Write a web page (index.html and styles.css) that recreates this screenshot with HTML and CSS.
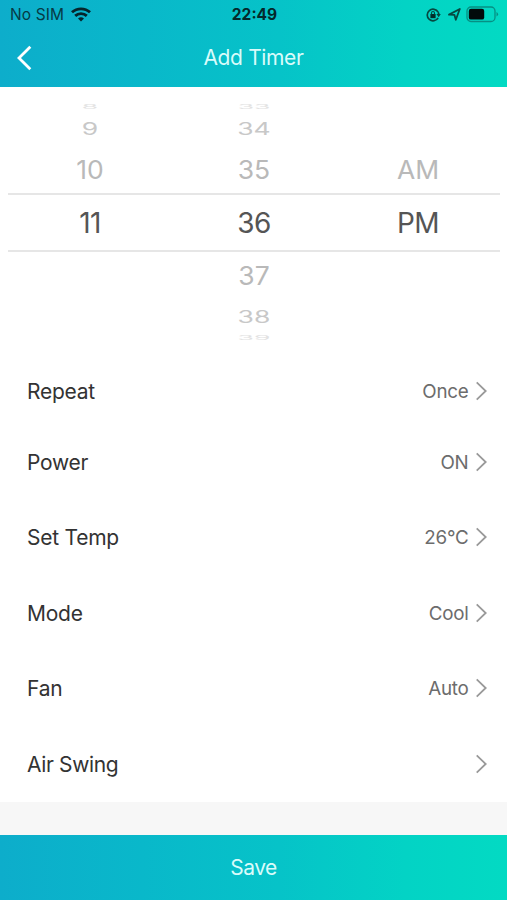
FILE: index.html
```html
<!DOCTYPE html>
<html lang="en">
<head>
<meta charset="utf-8">
<title>Add Timer</title>
<link rel="stylesheet" href="styles.css">
</head>
<body>
<header class="header">
  <div class="status">
    <div class="status-left">
      <span class="carrier">No SIM</span>
      <svg class="wifi" width="20" height="15" viewBox="0 0 20 15" fill="none" stroke="#06262c" stroke-width="2.9">
        <path d="M1 5.3C6 .7 14 .7 19 5.3"/>
        <path d="M4.2 8.9C7.5 5.9 12.5 5.9 15.8 8.9"/>
        <path d="M7 11.4Q10 9 13 11.4L10 14.5Z" fill="#06262c" stroke="none"/>
      </svg>
    </div>
    <span class="clock">22:49</span>
    <div class="status-right">
      <svg width="15" height="14" viewBox="0 0 15 14" fill="none" stroke="#064840" stroke-width="1.7">
        <path d="M12.1 4.2A5.8 5.8 0 1 0 12.1 9.8"/>
        <path d="M10.4 6h4.4l-2.1 3.2z" fill="#064840" stroke="none"/>
        <path d="M12.1 4.2Q12.9 5.4 12.8 7"/>
        <rect x="4.4" y="6" width="5.2" height="4.2" fill="#032d28" stroke="none"/>
        <path d="M5.5 6.5V5a1.5 1.5 0 0 1 3 0v1.5" stroke-width="1.1"/>
      </svg>
      <svg class="arrow" width="13" height="13" viewBox="0 0 13 13" fill="none" stroke="#064840" stroke-width="1.8" stroke-linejoin="round">
        <path d="M1 6.6L11.8 1L7.8 11.8L6.4 6.8Z"/>
      </svg>
      <svg class="battery" width="33" height="17" viewBox="0 0 33 17">
        <rect x="1" y="1" width="28" height="14.5" rx="4" fill="none" stroke="#078f83" stroke-width="1.3"/>
        <rect x="2.8" y="2.8" width="15.4" height="10.8" rx="2.2" fill="#020b0b"/>
        <path d="M30.5 6v4.5q1.6-.6 1.6-2.2T30.5 6Z" fill="#078f83"/>
      </svg>
    </div>
  </div>
  <div class="nav">
    <svg class="back" width="17" height="26" viewBox="0 0 17 26" fill="none" stroke="#fff" stroke-width="2.8"><path d="M15.3 1.8L4 13L15.3 24.2"/></svg>
    <h1 class="title">Add Timer</h1>
  </div>
</header>
<main>
  <section class="picker">
    <div class="wheel edge first"><span>8</span><span>33</span><span></span></div>
    <div class="wheel far"><span>9</span><span>34</span><span></span></div>
    <div class="wheel near"><span>10</span><span>35</span><span>AM</span></div>
    <div class="wheel selected"><span>11</span><span>36</span><span>PM</span></div>
    <div class="wheel near below"><span></span><span>37</span><span></span></div>
    <div class="wheel far below"><span></span><span>38</span><span></span></div>
    <div class="wheel edge last"><span></span><span>39</span><span></span></div>
  </section>
  <section class="settings">
    <div class="row repeat"><span class="label">Repeat</span><span class="value">Once</span><svg class="chev" viewBox="0 0 12 20"><path d="M.7 1.3L9.7 10L.7 18.7"/></svg></div>
    <div class="row"><span class="label">Power</span><span class="value">ON</span><svg class="chev" viewBox="0 0 12 20"><path d="M.7 1.3L9.7 10L.7 18.7"/></svg></div>
    <div class="row"><span class="label">Set Temp</span><span class="value">26°C</span><svg class="chev" viewBox="0 0 12 20"><path d="M.7 1.3L9.7 10L.7 18.7"/></svg></div>
    <div class="row"><span class="label">Mode</span><span class="value">Cool</span><svg class="chev" viewBox="0 0 12 20"><path d="M.7 1.3L9.7 10L.7 18.7"/></svg></div>
    <div class="row"><span class="label">Fan</span><span class="value">Auto</span><svg class="chev" viewBox="0 0 12 20"><path d="M.7 1.3L9.7 10L.7 18.7"/></svg></div>
    <div class="row"><span class="label swing">Air Swing</span><span class="value"></span><svg class="chev" viewBox="0 0 12 20"><path d="M.7 1.3L9.7 10L.7 18.7"/></svg></div>
  </section>
</main>
<button class="save">Save</button>
</body>
</html>
```
FILE: styles.css
```css
* { box-sizing: border-box; }
body {
  margin: 0;
  height: 900px;
  display: flex;
  flex-direction: column;
  background: #f7f7f7;
  font-family: Inter, "Liberation Sans", sans-serif;
  overflow: hidden;
}
.header, .save {
  background: linear-gradient(90deg, #0dadcb 0%, #09b8ca 28%, #06c3c8 55%, #03d3c5 80%, #03dac3 100%);
}
.header { height: 87px; }
.status {
  height: 29px;
  display: grid;
  grid-template-columns: 1fr auto 1fr;
  align-items: center;
  padding: 0 8px 0 10px;
}
.status-left, .status-right { display: flex; align-items: center; }
.status-right { justify-content: flex-end; }
.carrier { font-size: 15.5px; letter-spacing: .1px; color: #063a45; }
.wifi { margin-left: 7px; }
.clock { font-size: 15.5px; font-weight: 700; color: #04282b; }
.arrow { margin: 0 5px 0 7px; }
.nav {
  height: 58px;
  display: grid;
  grid-template-columns: 40px 1fr 40px;
  align-items: center;
}
.back { margin-left: 15px; }
.title {
  margin: 0;
  text-align: center;
  font-size: 21px;
  font-weight: 400;
  line-height: 58px;
  letter-spacing: -.35px;
  color: #d9fbfa;
}
main { height: 715px; background: #fff; }
.picker { height: 254px; padding: 17px 7px 0 8px; }
.wheel {
  display: grid;
  grid-template-columns: repeat(3, 1fr);
  align-items: center;
  text-align: center;
  font-size: 26.5px;
  line-height: 30px;
  color: #b9b9b9;
}
.near { height: 45px; padding-bottom: 3px; }
.near.below { height: 48px; padding-bottom: 2px; }
.near span { transform: scaleY(.97); }
.far { height: 39px; color: #c8c8c8; }
.far.below { height: 34px; }
.far span { transform: scaleY(.63); }
.selected {
  height: 59px;
  padding-top: 1px;
  border-top: 2px solid #e6e6e6;
  border-bottom: 2px solid #e6e6e6;
  font-size: 28px;
  letter-spacing: -.6px;
  color: #555;
}
.edge { height: 5px; line-height: 5px; color: #e2e2e2; }
.edge span { transform: scaleY(.22); }
.edge.last { height: 7px; line-height: 7px; }
.settings { padding-top: 14px; }
.row {
  height: 75.5px;
  display: flex;
  align-items: center;
  padding: 0 19px 0 27px;
}
.row.repeat { height: 69px; padding-top: 2px; }
.label { flex: 1; padding-top: 1px; font-size: 21px; letter-spacing: -.25px; color: #333; }
.label.swing { letter-spacing: -.35px; }
.value { padding-top: 1px; font-size: 18.8px; letter-spacing: -.25px; color: #6c6c6c; }
.chev {
  width: 12px;
  height: 20px;
  margin-left: 7.5px;
  fill: none;
  stroke: #999;
  stroke-width: 1.8;
}
.save {
  height: 65px;
  margin: auto 0 0;
  padding: 0;
  border: 0;
  font: 400 21px Inter, "Liberation Sans", sans-serif;
  letter-spacing: -.5px;
  color: #d9fbfa;
}
```
